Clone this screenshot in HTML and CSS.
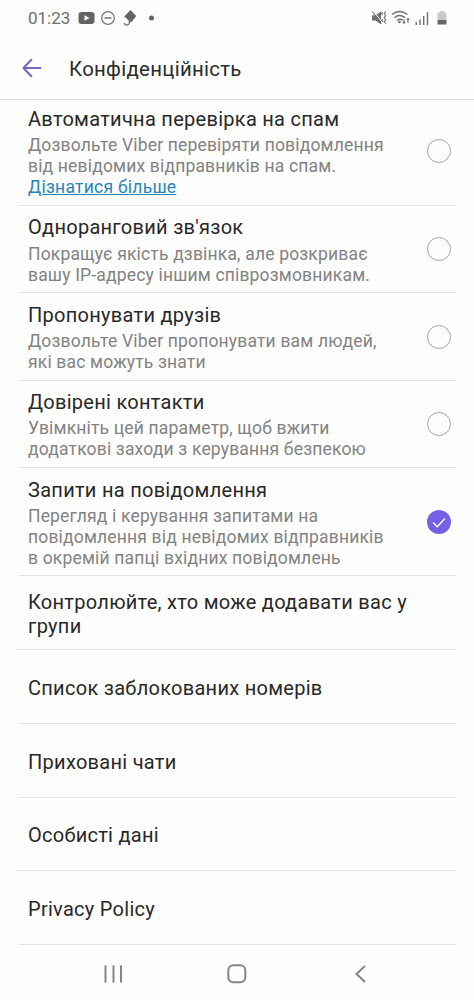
FILE: index.html
```
<!DOCTYPE html>
<html lang="uk">
<head>
<meta charset="utf-8">
<title>Конфіденційність</title>
<link rel="stylesheet" href="styles.css">
</head>
<body>
<div class="screen">
  <div class="status">
    <span class="clock">01:23</span>
    <svg class="status-left" width="80" height="20" viewBox="0 0 80 20">
      <rect x="0.5" y="4" width="16" height="12" rx="3" fill="#636363"/>
      <path d="M6.5 7.2v5.6l5-2.8z" fill="#fff"/>
      <circle cx="30" cy="10" r="6.3" fill="none" stroke="#707070" stroke-width="1.2"/>
      <path d="M26.500 10h7" stroke="#707070" stroke-width="1.500"/>
      <path d="M52.500 2l5.700 6-5 6.500-7-6z" fill="#636363"/>
      <path d="M51 12.500c1.500 5-3.500 6-5 2.500" fill="none" stroke="#707070" stroke-width="1.300"/>
      <circle cx="73.500" cy="10" r="2.500" fill="#636363"/>
    </svg>
    <svg class="status-right" width="78" height="20" viewBox="0 0 78 20">
      <path d="M0 7.200h3.500L9 3.500v13l-5.500-4H0z" fill="#707070"/>
      <path d="M1.200 3l8.500 10.500" stroke="#fefefe" stroke-width="1"/>
      <path d="M0.300 3.500l9 12" stroke="#707070" stroke-width="1"/>
      <path d="M13.700 3.500l-1.500 2 1.500 2-1.500 2 1.500 2-1.500 2 1.500 2M10.500 4l-1 1.500 1 1.500M10.700 11l-.8 1.500.8 1.500" fill="none" stroke="#707070" stroke-width="1.200"/>
      <g fill="none" stroke="#707070" stroke-width="1.500">
        <path d="M20 6.500q7.500-6 15.500 0M22.500 9.700q5-4.500 10.500 0M25 12.500q2.800-2.400 5.500-.3"/>
        <path d="M32 11.500v3M36 12v3" stroke-width="1.200"/>
      </g>
      <circle cx="27.500" cy="14" r="1.300" fill="#707070"/>
      <path d="M30.200 13.800h3.600l-1.800 2.400zM34.200 12h3.600L36 9.600z" fill="#707070"/>
      <path d="M44.200 14v3M48 11.500v5.500M51.700 8v9M55.500 4v13" stroke="#707070" stroke-width="1.400"/>
      <path d="M65.500 4.500h2.500V3h4v1.500h2.500V12h-9z" fill="#c9c9c9"/>
      <path d="M65.500 12h9v4.500h-9z" fill="#666"/>
    </svg>
  </div>
  <div class="header">
    <svg class="back" width="20" height="20" viewBox="0 0 20 20"><path d="M9.300 1.800L1.500 10l7.800 8.200M1.800 10h16.700" fill="none" stroke="#7467c6" stroke-width="2.100" stroke-linecap="round" stroke-linejoin="round"/></svg>
    <h1 class="heading">Конфіденційність</h1>
  </div>
  <div class="list">
    <div class="row row-first">
      <div class="copy"><div class="title">Автоматична перевірка на спам</div>
      <div class="desc">Дозвольте Viber перевіряти повідомлення<br>від невідомих відправників на спам.<br><a class="link">Дізнатися більше</a></div></div>
      <span class="check"></span>
    </div>
    <div class="row row-two">
      <div class="copy"><div class="title">Одноранговий зв'язок</div>
      <div class="desc">Покращує якість дзвінка, але розкриває<br>вашу IP-адресу іншим співрозмовникам.</div></div>
      <span class="check"></span>
    </div>
    <div class="row row-two">
      <div class="copy"><div class="title">Пропонувати друзів</div>
      <div class="desc">Дозвольте Viber пропонувати вам людей,<br>які вас можуть знати</div></div>
      <span class="check"></span>
    </div>
    <div class="row row-two">
      <div class="copy"><div class="title">Довірені контакти</div>
      <div class="desc">Увімкніть цей параметр, щоб вжити<br>додаткові заходи з керування безпекою</div></div>
      <span class="check"></span>
    </div>
    <div class="row row-three">
      <div class="copy"><div class="title">Запити на повідомлення</div>
      <div class="desc">Перегляд і керування запитами на<br>повідомлення від невідомих відправників<br>в окремій папці вхідних повідомлень</div></div>
      <span class="check check-on"><svg width="24" height="24" viewBox="0 0 24 24"><path d="M6 12.500l4.200 4.200L18 8.500" fill="none" stroke="#fff" stroke-width="1.300"/></svg></span>
    </div>
    <div class="row row-plain"><div class="title">Контролюйте, хто може додавати вас у<br>групи</div></div>
    <div class="row row-plain"><div class="title">Список заблокованих номерів</div></div>
    <div class="row row-plain"><div class="title">Приховані чати</div></div>
    <div class="row row-plain"><div class="title">Особисті дані</div></div>
    <div class="row row-plain"><div class="title">Privacy Policy</div></div>
  </div>
  <div class="nav">
    <svg width="20" height="20" viewBox="0 0 20 20"><path d="M2.500 1.500v17M10.500 1.500v17M18 1.500v17" stroke="#858585" stroke-width="2"/></svg>
    <svg width="20" height="20" viewBox="0 0 20 20"><rect x="1.300" y="1.300" width="17" height="17" rx="5" fill="none" stroke="#858585" stroke-width="2"/></svg>
    <svg width="20" height="20" viewBox="0 0 20 20"><path d="M14 2L5.500 10l8.500 8" fill="none" stroke="#858585" stroke-width="2"/></svg>
  </div>
</div>
</body>
</html>
```
FILE: styles.css
```
* { box-sizing: border-box; }
body { margin: 0; background: #fefefe; font-family: Roboto, "Noto Sans", sans-serif; }
.screen { width: 474px; height: 1000px; overflow: hidden; display: flex; flex-direction: column; }
.status { height: 36px; padding-left: 28px; display: flex; align-items: center; color: #6d6d6d; flex: none; }
.clock { width: 50px; font-size: 17px; font-weight: 400; letter-spacing: 0; }
.status-right { margin-left: auto; margin-right: 24px; }
.header { height: 64px; padding-left: 22px; display: flex; align-items: center; gap: 27px; border-bottom: 1px solid #dcdcdc; flex: none; }
.heading { margin: 0; padding-top: 2px; font-size: 20.4px; font-weight: 400; line-height: 24px; letter-spacing: 0.3px; color: #2b2b2b; }
.list { flex: none; padding: 0 18px; }
.row { border-bottom: 1px solid #e4e4e4; padding: 10px 5px 0 10px; display: flex; justify-content: space-between; align-items: flex-start; }
.row-first { height: 106px; padding-top: 7px; }
.row-two { height: 87.4px; padding-top: 9.4px; }
.row-three { height: 108.1px; }
.row-plain { height: 73.75px; padding-top: 3.400px; align-items: center; }
.title { font-size: 20px; line-height: 24.3px; letter-spacing: 0.28px; color: #282828; white-space: nowrap; }
.desc { margin-top: 4px; font-size: 17.5px; line-height: 21px; letter-spacing: 0.17px; color: #828282; white-space: nowrap; }
.link { color: #2685b6; text-decoration: underline; letter-spacing: 0.25px; }
.check { width: 24px; height: 24px; flex: none; border: 1px solid #a3a3a3; border-radius: 50%; align-self: center; margin-top: -10px; }
.row-first .check { margin-top: -10px; }
.row-two .check { margin-top: -9.4px; }
.check-on { border: 0; background: #7360e4; }
.check-on svg { display: block; }
.nav { height: 57px; padding: 0 103px; display: flex; align-items: center; justify-content: space-between; flex: none; }
```
